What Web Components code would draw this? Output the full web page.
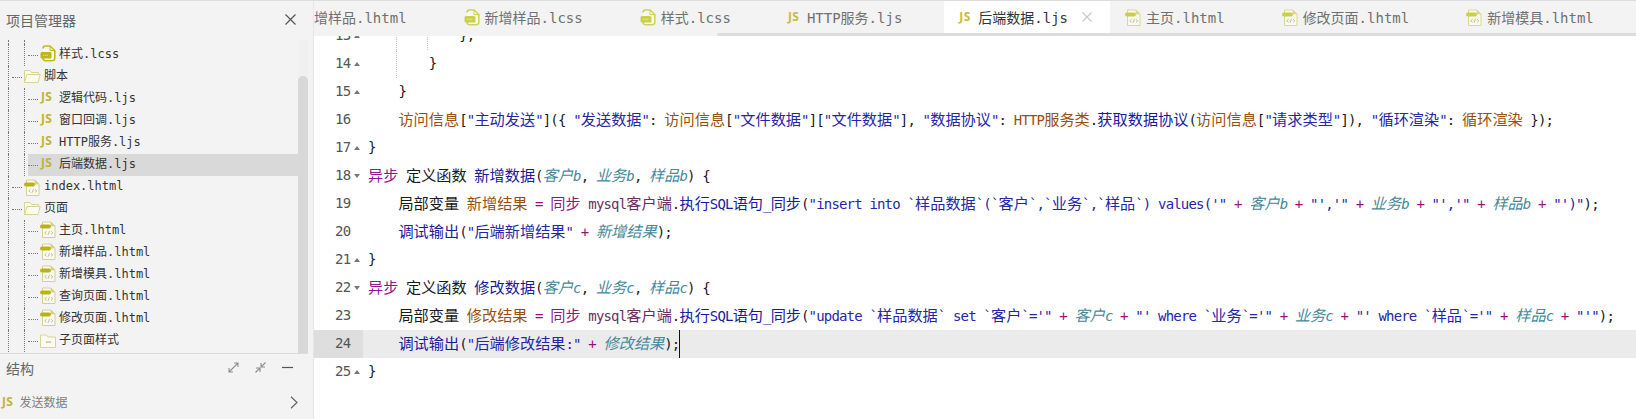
<!DOCTYPE html>
<html lang="zh"><head><meta charset="utf-8"><title>IDE</title>
<style>
html,body{margin:0;padding:0;background:#fff;overflow:hidden}
body{font-family:"DejaVu Sans Mono","Noto Sans CJK SC",monospace}
</style></head><body>
<ide-app>
  <side-panel slot="side">
    <tree-row depth="2" spacer></tree-row>
    <tree-row depth="2" icon="lcss">样式.lcss</tree-row>
    <tree-row depth="1" icon="folder">脚本</tree-row>
    <tree-row depth="2" icon="js">逻辑代码.ljs</tree-row>
    <tree-row depth="2" icon="js">窗口回调.ljs</tree-row>
    <tree-row depth="2" icon="js">HTTP服务.ljs</tree-row>
    <tree-row depth="2" icon="js" selected>后端数据.ljs</tree-row>
    <tree-row depth="1" icon="lhtml">index.lhtml</tree-row>
    <tree-row depth="1" icon="folder">页面</tree-row>
    <tree-row depth="2" icon="lhtml">主页.lhtml</tree-row>
    <tree-row depth="2" icon="lhtml">新增样品.lhtml</tree-row>
    <tree-row depth="2" icon="lhtml">新增模具.lhtml</tree-row>
    <tree-row depth="2" icon="lhtml">查询页面.lhtml</tree-row>
    <tree-row depth="2" icon="lhtml">修改页面.lhtml</tree-row>
    <tree-row depth="2" icon="folder-minus">子页面样式</tree-row>
  </side-panel>
  <tab-bar slot="tabs">
    <tab-item icon="lhtml">新增样品.lhtml</tab-item>
    <tab-item icon="lcss">新增样品.lcss</tab-item>
    <tab-item icon="lcss">样式.lcss</tab-item>
    <tab-item icon="js">HTTP服务.ljs</tab-item>
    <tab-item icon="js" active>后端数据.ljs</tab-item>
    <tab-item icon="lhtml">主页.lhtml</tab-item>
    <tab-item icon="lhtml">修改页面.lhtml</tab-item>
    <tab-item icon="lhtml">新增模具.lhtml</tab-item>
  </tab-bar>
  <code-editor slot="editor"></code-editor>
</ide-app>
<script>
function shadow(el,html){const r=el.attachShadow({mode:'open'});r.innerHTML=html;return r;}

class FileIcon extends HTMLElement{
  connectedCallback(){
    const k=this.getAttribute('kind');let b='';
    if(k==='js'){
      b='<span class="js">JS</span>';
    }else if(k==='lcss'){
      b=`<svg width="16" height="17" viewBox="0 0 16 17"><path d="M3 3.5 Q3 1 5.5 1 H10 L14.8 5.5 V13 Q14.8 15.8 12 15.8 H6 Q3 15.8 3 13" fill="#fff" fill-opacity=".4" stroke="var(--line,#c2bb20)" stroke-width="1.6"/><path d="M10 1 V5.5 H14.8" fill="none" stroke="var(--line,#c2bb20)" stroke-width="1"/><rect x="0.5" y="7" width="11" height="6.5" rx="1.6" fill="var(--fill,#bdb51a)"/><path d="M3 10.2h5.5" stroke="#fff" stroke-opacity=".55" stroke-width="1.1" stroke-dasharray="1.3 .6"/></svg>`;
    }else if(k==='lhtml'){
      b=`<svg width="16" height="17" viewBox="0 0 16 17"><path d="M2.5 1 H11 L15 5 V16.5 H2.5 Z" fill="#fbfaf0" stroke="var(--pale,#d6d08a)" stroke-width="1"/><path d="M11 1 V5 H15" fill="var(--pale,#d6d08a)" stroke="var(--pale,#d6d08a)" stroke-width=".8"/><rect x="0" y="3.6" width="11" height="4" rx="2" fill="var(--fill,#b9b21a)"/><path d="M6.6 10.2 L4.8 11.8 L6.6 13.4 M11 10.2 L12.8 11.8 L11 13.4 M9.6 9.8 L8 13.8" fill="none" stroke="#b4b8a4" stroke-width=".9"/></svg>`;
    }else if(k==='folder'){
      b=`<svg width="17" height="15" viewBox="0 0 17 15"><path d="M.5 13.5 V1.5 H6 L7.5 3.5 H14.5 V5.5 M.5 13.5 L3 5.5 H16.2 L14 13.5 Z" fill="#fbfbf2" stroke="#d9d494" stroke-width="1"/></svg>`;
    }else{
      b=`<svg width="17" height="15" viewBox="0 0 17 15"><path d="M.5 13.5 V1 H6.5 L8 3 H15.5 V13.5 Z" fill="#fbfbf2" stroke="#d9d494" stroke-width="1"/><path d="M6 8h5" stroke="#a7a79a"/></svg>`;
    }
    shadow(this,`<style>:host{display:block;line-height:0}
      .js{display:block;font:700 12px/12px "Open Sans",sans-serif;color:var(--js,#bfb52d);letter-spacing:.4px}</style>${b}`);
  }
}
customElements.define('file-icon',FileIcon);

class IdeApp extends HTMLElement{
  constructor(){super();shadow(this,`<style>
    :host{display:grid;grid-template-columns:313px 1fr;width:1636px;height:419px;border-top:1px solid #dcdcdc;box-sizing:border-box;overflow:hidden;background:#fff}
    .l{min-width:0;height:418px}
    .r{min-width:0;display:flex;flex-direction:column;height:418px;border-left:1px solid #e6e6e6;overflow:hidden}
  </style><div class="l"><slot name="side"></slot></div><div class="r"><slot name="tabs"></slot><slot name="editor"></slot></div>`);}
}
customElements.define('ide-app',IdeApp);

class SidePanel extends HTMLElement{
  constructor(){super();shadow(this,`<style>
    :host{display:flex;flex-direction:column;height:100%;background:#f3f3f3;color:#555;font-family:"Noto Sans CJK SC",sans-serif}
    header{height:39px;flex:none;display:flex;align-items:center;justify-content:space-between;padding:0 17px 2px 6px;font-size:14px;line-height:20px;color:#666;box-sizing:border-box}
    .treewrap{height:313px;flex:none;display:flex;border-bottom:1px solid #dcdcdc;width:308px;box-sizing:content-box;overflow:hidden}
    .tree{width:298px;flex:none;overflow:hidden}
    .bar{width:10px;flex:none;background:#f0f0f0;display:flex;flex-direction:column}
    .thumb{margin-top:36px;flex:1;background:#d8d8d8;border-radius:5px 5px 0 0}
    .head2{height:29px;flex:none;display:flex;align-items:center;padding:0 20px 2px 6px;font-size:14px;line-height:20px;color:#666;box-sizing:border-box}
    .head2 span{flex:1}
    .head2 .ic{display:flex;gap:16px;align-items:center}
    .node{height:24px;margin-top:7px;display:flex;align-items:center;padding:0 15px 0 2px;font-size:12px;color:#808080;--js:#bfb52d}
    .node .t{flex:1;margin-left:6px;line-height:20px}
    svg{display:block}
  </style>
  <header><span>项目管理器</span>
    <svg width="11" height="11" viewBox="0 0 11 11"><path d="M.5 .5 L10.5 10.5 M10.5 .5 L.5 10.5" stroke="#555" stroke-width="1.2"/></svg></header>
  <div class="treewrap"><div class="tree"><slot></slot></div><div class="bar"><div class="thumb"></div></div></div>
  <div class="head2"><span>结构</span><div class="ic">
    <svg width="11" height="11" viewBox="0 0 11 11"><path d="M1 10 L10 1 M6 1 H10 V5 M1 6 V10 H5" fill="none" stroke="#8a8f96" stroke-width="1.1"/></svg>
    <svg width="11" height="11" viewBox="0 0 11 11"><path d="M.5 10.5 L4.6 6.4 M1 6 H5 V10 M10.5 .5 L6.4 4.6 M6 1 V5 H10" fill="none" stroke="#8a8f96" stroke-width="1.15"/></svg>
    <svg width="11" height="11" viewBox="0 0 11 11"><path d="M0 5.5 H11" stroke="#555" stroke-width="1.2"/></svg>
  </div></div>
  <div class="node"><file-icon kind="js"></file-icon><span class="t">发送数据</span>
    <svg width="8" height="13" viewBox="0 0 8 13"><path d="M1 .8 L7 6.5 L1 12.2" fill="none" stroke="#666" stroke-width="1.2"/></svg></div>`);}
}
customElements.define('side-panel',SidePanel);

class TreeRow extends HTMLElement{
  connectedCallback(){
    const d=this.getAttribute('depth'),ic=this.getAttribute('icon');
    if(this.hasAttribute('spacer')){
      shadow(this,`<style>:host{display:flex;height:4px;padding-left:8px}
        .g1{width:16px;border-left:1px dotted #777;box-sizing:border-box}.g2{border-left:1px dotted #777}</style><div class="g1"></div><div class="g2"></div>`);
      return;
    }
    const sel=this.hasAttribute('selected');
    const two=d==='2';
    const isJs=ic==='js';
    shadow(this,`<style>
      :host{display:flex;height:22px;padding-left:8px;font:12px/20px "DejaVu Sans Mono","Noto Sans CJK SC",monospace;color:#333;box-sizing:border-box}
      .g1{width:16px;flex:none;border-left:1px dotted #777;box-sizing:border-box;position:relative}
      .dash{width:10px;height:0;border-top:1px dotted #777;flex:none}
      .g1 .dash{margin:11px 0 0 3px}
      .g2{width:4px;flex:none;border-left:1px dotted #777;box-sizing:border-box}
      .body{flex:1;display:flex;min-width:0;${sel?'background:#d9d9d9;':''}}
      .body>.dash{margin-top:11px}
      .ic{flex:none;${two?'margin:-1px 0 0 2px;width:19px;':'margin:1px 0 0 0;width:20px;'}}
      .ic.js{margin-top:-3px;margin-left:3px;width:18px;align-self:flex-start;padding-top:4px}
      .ic.f{margin-top:1px}
      .ic.fm{margin-top:2px}
      .ic file-icon{margin-top:2px}
      .txt{white-space:pre}
    </style><div class="g1">${two?'':'<div class="dash"></div>'}</div>${two?'<div class="g2"></div>':''}<div class="body">${two?'<div class="dash"></div>':''}<div class="ic ${isJs?'js':ic==='folder'?'f':ic==='folder-minus'?'fm':''}"><file-icon kind="${ic}"></file-icon></div><span class="txt"><slot></slot></span></div>`);
  }
}
customElements.define('tree-row',TreeRow);

class TabBar extends HTMLElement{
  constructor(){super();shadow(this,`<style>
    :host{display:block;flex:none;background:#f3f3f3;height:35px}
    .tabs{display:flex;height:32px;overflow:hidden}
    .in{display:flex;margin-left:-50px;flex:none}
    .track{height:3px}
    .thumb{height:3px;margin-left:403px;background:#dcdcdc;border-radius:2px 0 0 2px}
  </style><div class="tabs"><div class="in"><slot></slot></div></div><div class="track"><div class="thumb"></div></div>`);}
}
customElements.define('tab-bar',TabBar);

class TabItem extends HTMLElement{
  connectedCallback(){
    const a=this.hasAttribute('active'),ic=this.getAttribute('icon');
    shadow(this,`<style>
      :host{display:flex;align-items:center;height:32px;padding:0 42px 0 15px;font:14px/30px "DejaVu Sans Mono","Noto Sans CJK SC",monospace;color:${a?'#333':'#707070'};background:${a?'#fff':'transparent'};position:relative;flex:none;
        --line:#cfd35e;--fill:#c8cf48;--pale:#dcd88a;--js:#c6bd3a}
      .i{flex:none;width:${ic==='js'?19:21}px}
      .t{white-space:pre;flex:none;margin-top:1px}
      .x{position:absolute;right:18px;top:11px}
    </style><div class="i"><file-icon kind="${ic}"></file-icon></div><span class="t"><slot></slot></span>${a?'<svg class="x" width="10" height="10" viewBox="0 0 10 10"><path d="M.5 .5 L9.5 9.5 M9.5 .5 L.5 9.5" stroke="#c8c8c8" stroke-width="1.1"/></svg>':''}`);
  }
}
customElements.define('tab-item',TabItem);

const SPLIT=/[\u3000-\u9fff\uff00-\uffef]+|[^\u3000-\u9fff\uff00-\uffef]+/g;
const esc=s=>s.replace(/&/g,'&amp;').replace(/</g,'&lt;');
function runs(cls,t){return t.match(SPLIT).map(p=>`<span class="${cls} ${/^[\u3000-\u9fff\uff00-\uffef]/.test(p)?'c':'a'}">${esc(p)}</span>`).join('');}

class CodeLine extends HTMLElement{
  set data(o){
    const code=o.t.map(([c,t])=>runs(c,t)).join('');
    const fold=o.f==='u'?'<svg class="fold" width="6" height="4" viewBox="0 0 6 4"><path d="M3 0 L6 4 H0Z" fill="#777"/></svg>':o.f==='d'?'<svg class="fold" width="6" height="4" viewBox="0 0 6 4"><path d="M0 0 H6 L3 4Z" fill="#777"/></svg>':'';
    const guides=(o.g||[]).map(x=>`<i class="guide" style="left:${x}px"></i>`).join('');
    shadow(this,`<style>
      :host{display:flex;height:28px;line-height:26px;font-size:14px;position:relative;white-space:pre;${o.cur?'background:#ebebeb;':''}}
      .gut{width:49px;flex:none;position:relative;box-sizing:border-box;padding-left:21px;${o.cur?'background:#dedede;':''};font-family:"DejaVu Sans Mono",monospace;letter-spacing:-.77px;color:#555}
      .fold{position:absolute;left:40px;top:12px}
      .code{padding-left:5px;position:relative;flex:1;min-width:0}
      .a{font:14px/25px "DejaVu Sans Mono",monospace;letter-spacing:-.83px}
      .c{font:15.2px/25px "Noto Sans CJK SC",sans-serif}
      .d{color:#1a1a1a}.k{color:#8a1a8a}.f{color:#1a1a9a}.v{color:#99500f}.s{color:#2626a6}.o{color:#990f80}
      .m{color:#6b2f5c}
      .p{color:#45899b;font-style:italic}
      .guide{position:absolute;top:0;height:28px;border-left:1px dotted #c8c8c8}
      .caret{position:absolute;top:0;width:1px;height:28px;background:#111}
    </style><div class="gut">${o.n}${fold}</div><div class="code">${guides}${code}${o.cur?'<span class="caret"></span>':''}</div>`);
  }
}
customElements.define('code-line',CodeLine);

const P=(a,b,c)=>[['f',a],['d','('],['p',b[0]],['d',', '],['p',b[1]],['d',', '],['p',b[2]],['d',') {']];
const LINES=[
 {n:13,f:'u',g:[33,64],t:[['d','            },']]},
 {n:14,f:'u',g:[33],t:[['d','        }']]},
 {n:15,f:'u',t:[['d','    }']]},
 {n:16,t:[['d','    '],['v','访问信息'],['d','['],['s','"主动发送"'],['d',']({ '],['s','"发送数据"'],['d',': '],['v','访问信息'],['d','['],['s','"文件数据"'],['d','][' ],['s','"文件数据"'],['d','], '],['s','"数据协议"'],['d',': '],['v','HTTP服务类'],['d','.'],['f','获取数据协议'],['d','('],['v','访问信息'],['d','['],['s','"请求类型"'],['d',']), '],['s','"循环渲染"'],['d',': '],['v','循环渲染'],['d',' });']]},
 {n:17,f:'u',t:[['d','}']]},
 {n:18,f:'d',t:[['k','异步'],['d',' 定义函数 '],...P('新增数据',['客户b','业务b','样品b'])]},
 {n:19,t:[['d','    局部变量 '],['v','新增结果'],['o',' = '],['k','同步'],['d',' '],['m','mysql客户端'],['d','.'],['f','执行SQL语句_同步'],['d','('],['s','"insert into `样品数据`(`客户`,`业务`,`样品`) values(\'"'],['o',' + '],['p','客户b'],['o',' + '],['s','"\',\'"'],['o',' + '],['p','业务b'],['o',' + '],['s','"\',\'"'],['o',' + '],['p','样品b'],['o',' + '],['s','"\')"'],['d',');']]},
 {n:20,t:[['d','    '],['f','调试输出'],['d','('],['s','"后端新增结果"'],['o',' + '],['p','新增结果'],['d',');']]},
 {n:21,f:'u',t:[['d','}']]},
 {n:22,f:'d',t:[['k','异步'],['d',' 定义函数 '],...P('修改数据',['客户c','业务c','样品c'])]},
 {n:23,t:[['d','    局部变量 '],['v','修改结果'],['o',' = '],['k','同步'],['d',' '],['m','mysql客户端'],['d','.'],['f','执行SQL语句_同步'],['d','('],['s','"update `样品数据` set `客户`=\'"'],['o',' + '],['p','客户c'],['o',' + '],['s','"\' where `业务`=\'"'],['o',' + '],['p','业务c'],['o',' + '],['s','"\' where `样品`=\'"'],['o',' + '],['p','样品c'],['o',' + '],['s','"\'"'],['d',');']]},
 {n:24,cur:1,t:[['d','    '],['f','调试输出'],['d','('],['s','"后端修改结果:"'],['o',' + '],['p','修改结果'],['d',');']]},
 {n:25,f:'u',t:[['d','}']]}
];

class CodeEditor extends HTMLElement{
  constructor(){super();
    const r=shadow(this,`<style>:host{display:block;flex:1;min-height:0;overflow:hidden;background:#fff}
      .scroll{margin-top:-14px}code-line{display:flex}</style><div class="scroll"></div>`);
    const s=r.querySelector('.scroll');
    LINES.forEach(l=>{const e=document.createElement('code-line');e.data=l;s.appendChild(e);});
  }
}
customElements.define('code-editor',CodeEditor);
</script>
</body></html>
